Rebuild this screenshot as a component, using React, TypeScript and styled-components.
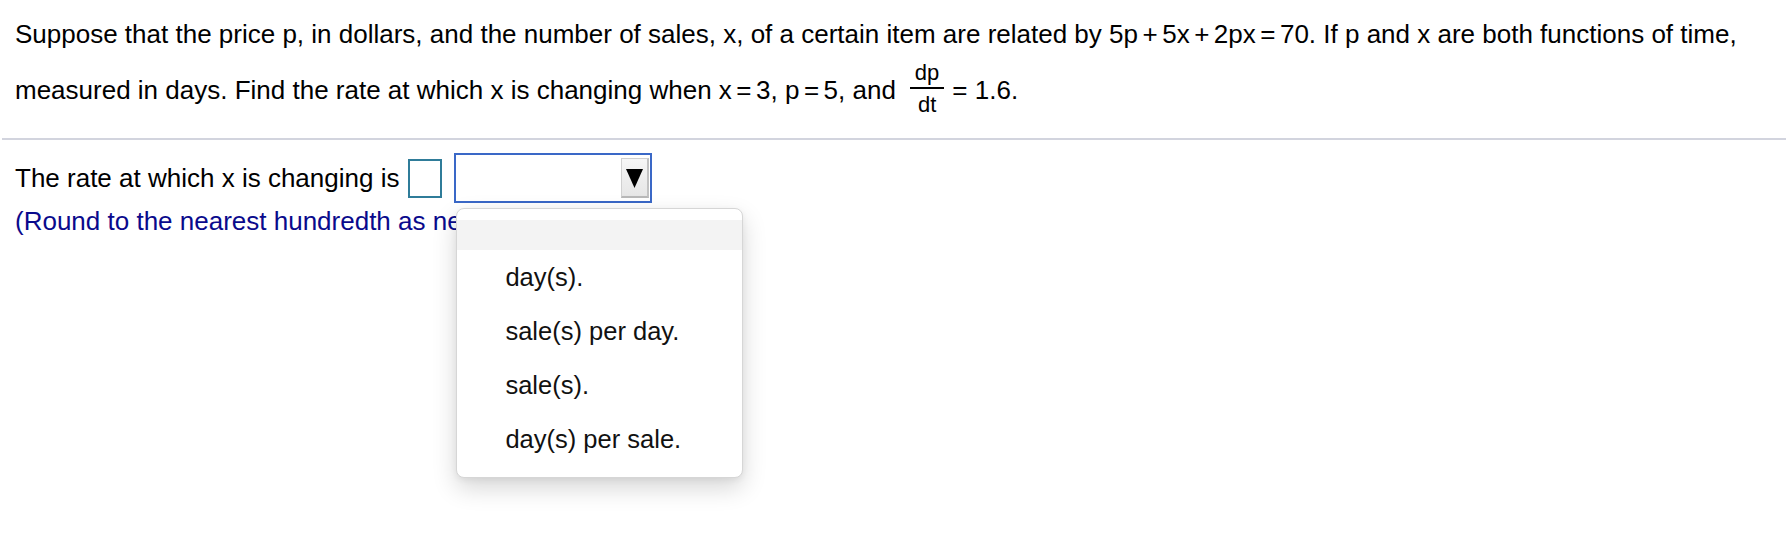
import React from "react"
import styled, { createGlobalStyle } from "styled-components"

const GlobalStyle = createGlobalStyle`
  html, body {
    margin: 0;
    padding: 0;
    background: #ffffff;
  }
  body {
    font-family: "Liberation Sans", Arial, sans-serif;
    color: #000000;
  }
`

const Page = styled.div`
  width: 1786px;
  min-height: 536px;
  background: #ffffff;
`

const Question = styled.div`
  padding: 19px 0 0 15px;
  font-size: 26px;
`

const Line = styled.div<{ $gap?: number }>`
  line-height: 30px;
  margin-top: ${(p) => p.$gap ?? 0}px;
  white-space: nowrap;
`

const Op = styled.span`
  margin: 0 4.5px;
`

const Fraction = styled.span`
  display: inline-flex;
  flex-direction: column;
  align-items: center;
  vertical-align: 19px;
  margin: 0 1px 0 7px;
  width: 34px;
  font-size: 22px;
`

const FracPart = styled.span`
  line-height: 24px;
`

const FracBar = styled.span`
  align-self: stretch;
  height: 1.5px;
  background: #000000;
  margin: 2px 0 4.5px;
`

const Separator = styled.hr`
  margin: 21px 0 0 2px;
  border: none;
  height: 2px;
  background: #d2d4de;
`

const Answer = styled.div`
  padding: 13px 0 0 15px;
  font-size: 26px;
`

const AnswerRow = styled.div`
  display: flex;
  align-items: center;
  height: 50px;
`

const Label = styled.span`
  line-height: 30px;
  white-space: nowrap;
`

const BlankBox = styled.span`
  box-sizing: border-box;
  width: 34px;
  height: 39px;
  margin-left: 9px;
  border: 2px solid #2f7c99;
  background: #ffffff;
`

const SelectWrap = styled.div`
  position: relative;
  z-index: 2;
  margin-left: 12px;
`

const SelectBox = styled.div`
  box-sizing: border-box;
  width: 198px;
  height: 50px;
  border: 2px solid #3a68c7;
  background: #ffffff;
  display: flex;
  justify-content: flex-end;
  align-items: center;
  padding-right: 1px;
`

const ArrowButton = styled.span`
  box-sizing: border-box;
  width: 28px;
  height: 40px;
  display: flex;
  align-items: center;
  justify-content: center;
  background: linear-gradient(#f6f6f6, #e6e6e6);
  border: 1px solid #d0d0d0;
  border-right: 2px solid #c2c2c2;
  border-bottom: 2px solid #b8b8b8;
`

const Menu = styled.div`
  position: absolute;
  top: 55px;
  left: 2px;
  box-sizing: border-box;
  width: 287px;
  padding: 11px 0 11px;
  background: #ffffff;
  border: 1px solid #d6d6d6;
  border-radius: 8px;
  box-shadow: 0 10px 24px rgba(0, 0, 0, 0.16), 0 2px 6px rgba(0, 0, 0, 0.06);
`

const MenuItem = styled.div<{ $active?: boolean }>`
  height: ${(p) => (p.$active ? 30 : 54)}px;
  display: flex;
  align-items: center;
  padding-left: 48px;
  font-size: 25.5px;
  line-height: 30px;
  color: #111111;
  background: ${(p) => (p.$active ? "#f3f3f3" : "transparent")};
  white-space: nowrap;
`

const Hint = styled.div`
  position: relative;
  z-index: 1;
  margin-top: 4px;
  color: #0a0a8c;
  line-height: 28px;
  white-space: nowrap;
`

const options = ["day(s).", "sale(s) per day.", "sale(s).", "day(s) per sale."]

const App: React.FC = () => {
  return (
    <Page>
      <GlobalStyle />
      <Question>
        <Line>
          Suppose that the price p, in dollars, and the number of sales, x, of a
          certain item are related by 5p<Op>+</Op>5x<Op>+</Op>2px<Op>=</Op>70.
          If p and x are both functions of time,
        </Line>
        <Line $gap={12}>
          measured in days. Find the rate at which x is changing when x<Op>=</Op>
          3, p<Op>=</Op>5, and{" "}
          <Fraction>
            <FracPart>dp</FracPart>
            <FracBar />
            <FracPart>dt</FracPart>
          </Fraction>{" "}
          = 1.6.
        </Line>
      </Question>
      <Separator />
      <Answer>
        <AnswerRow>
          <Label>The rate at which x is changing is</Label>
          <BlankBox />
          <SelectWrap>
            <SelectBox>
              <ArrowButton>
                <svg width="17" height="20" viewBox="0 0 17 20">
                  <polygon points="0,1 17,1 8.5,20" fill="#000000" />
                </svg>
              </ArrowButton>
            </SelectBox>
            <Menu>
              <MenuItem $active />
              {options.map((o) => (
                <MenuItem key={o}>{o}</MenuItem>
              ))}
            </Menu>
          </SelectWrap>
        </AnswerRow>
        <Hint>(Round to the nearest hundredth as needed.)</Hint>
      </Answer>
    </Page>
  )
}

export default App
